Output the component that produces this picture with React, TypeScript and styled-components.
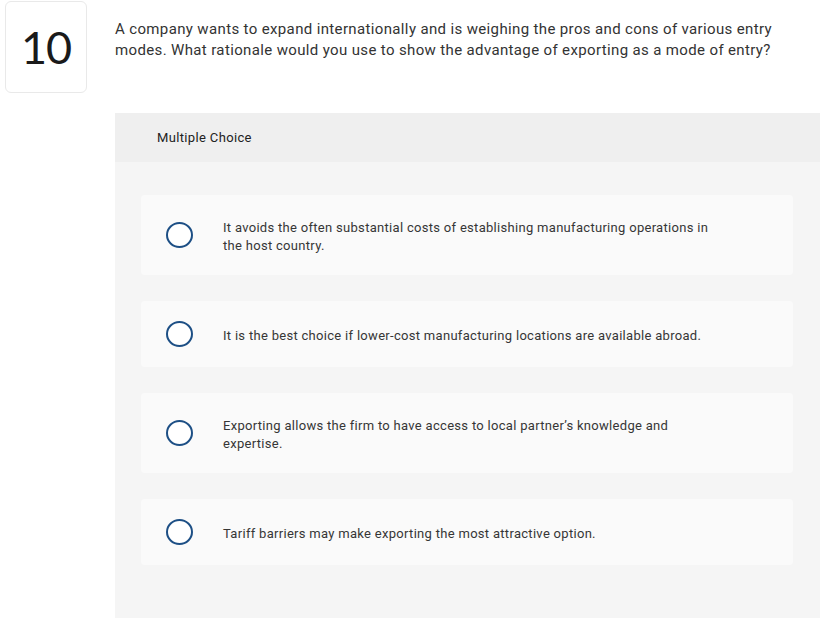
import React from "react";
import styled, { createGlobalStyle } from "styled-components";

const GlobalStyle = createGlobalStyle`
  html, body {
    margin: 0;
    padding: 0;
    background: #fff;
  }
  body {
    font-family: Roboto, "Liberation Sans", Arial, sans-serif;
    color: #2b2b2b;
  }
`;

const Page = styled.div`
  display: flex;
  align-items: flex-start;
  gap: 28px;
  padding: 1px 4px 0 5px;
`;

const NumberBox = styled.div`
  flex: 0 0 auto;
  width: 80px;
  height: 90px;
  border: 1px solid #e9e9e9;
  border-radius: 6px;
  display: flex;
  align-items: center;
  justify-content: center;
  font-family: Lato, Roboto, sans-serif;
  font-size: 45px;
  font-weight: 400;
  color: #1a1a1a;
  letter-spacing: -1px;
`;

const Content = styled.div`
  flex: 1;
  display: flex;
  flex-direction: column;
`;

const Question = styled.p`
  margin: 18px 0 0;
  max-width: 690px;
  font-size: 15px;
  line-height: 21px;
  letter-spacing: 0.36px;
  color: #333;
`;

const Panel = styled.section`
  margin-top: 52px;
  background: #f5f5f5;
  height: 505px;
`;

const PanelHeader = styled.div`
  background: #efefef;
  height: 49px;
  display: flex;
  align-items: center;
  padding-left: 42px;
  font-size: 13px;
  letter-spacing: 0.35px;
  color: #222;
`;

const OptionList = styled.div`
  display: flex;
  flex-direction: column;
  gap: 26px;
  padding: 33px 27px 0 26px;
`;

const OptionCard = styled.label`
  display: flex;
  align-items: center;
  gap: 30px;
  padding: 20px 0 20px 25px;
  background: #fafafa;
  border-radius: 4px;
  cursor: pointer;
`;

const Radio = styled.span`
  flex: 0 0 auto;
  box-sizing: border-box;
  width: 27px;
  height: 26px;
  border: 2px solid #1d4f85;
  border-radius: 50%;
  background: #fff;
`;

const OptionText = styled.span`
  max-width: 490px;
  padding: 4px 0 0;
  font-size: 13px;
  line-height: 18px;
  letter-spacing: 0.3px;
  color: #363636;
`;

const options = [
  "It avoids the often substantial costs of establishing manufacturing operations in the host country.",
  "It is the best choice if lower-cost manufacturing locations are available abroad.",
  "Exporting allows the firm to have access to local partner\u2019s knowledge and expertise.",
  "Tariff barriers may make exporting the most attractive option.",
];

export default function App() {
  return (
    <>
      <GlobalStyle />
      <Page>
        <NumberBox>10</NumberBox>
        <Content>
          <Question>
            A company wants to expand internationally and is weighing the pros and cons of various entry
            modes. What rationale would you use to show the advantage of exporting as a mode of entry?
          </Question>
          <Panel>
            <PanelHeader>Multiple Choice</PanelHeader>
            <OptionList>
              {options.map((text) => (
                <OptionCard key={text}>
                  <Radio />
                  <OptionText>{text}</OptionText>
                </OptionCard>
              ))}
            </OptionList>
          </Panel>
        </Content>
      </Page>
    </>
  );
}
